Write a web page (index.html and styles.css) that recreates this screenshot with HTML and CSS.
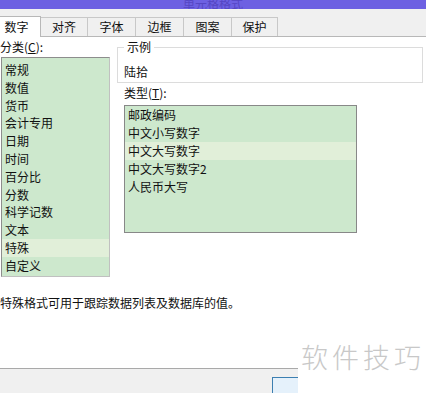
FILE: index.html
```html
<!DOCTYPE html>
<html lang="zh-CN">
<head>
    <meta charset="UTF-8">
    <meta name="viewport" content="width=device-width, initial-scale=1.0">
    <title>单元格格式</title>
    <link rel="stylesheet" href="styles.css">
</head>
<body>
    <div class="dialog">
        <div class="titlebar"><span>单元格格式</span></div>

        <div class="tabs">
            <div class="tab active first">数字</div>
            <div class="tab">对齐</div>
            <div class="tab">字体</div>
            <div class="tab">边框</div>
            <div class="tab">图案</div>
            <div class="tab last">保护</div>
        </div>

        <div class="panel">
            <div class="columns">
                <div class="col-left">
                    <div class="label">分类(<u>C</u>):</div>
                    <ul class="list category-list">
                        <li>常规</li>
                        <li>数值</li>
                        <li>货币</li>
                        <li>会计专用</li>
                        <li>日期</li>
                        <li>时间</li>
                        <li>百分比</li>
                        <li>分数</li>
                        <li>科学记数</li>
                        <li>文本</li>
                        <li class="selected">特殊</li>
                        <li>自定义</li>
                    </ul>
                </div>
                <div class="col-right">
                    <fieldset class="sample">
                        <legend>示例</legend>
                        <div class="sample-value">陆拾</div>
                    </fieldset>
                    <div class="label type-label">类型(<u>T</u>):</div>
                    <ul class="list type-list">
                        <li>邮政编码</li>
                        <li>中文小写数字</li>
                        <li class="selected">中文大写数字</li>
                        <li>中文大写数字2</li>
                        <li>人民币大写</li>
                    </ul>
                </div>
            </div>
            <p class="desc">特殊格式可用于跟踪数据列表及数据库的值。</p>
        </div>

        <div class="footer">
            <button type="button" class="ok-btn" aria-label="确定"></button>
        </div>

        <div class="watermark">软件技巧</div>
    </div>
</body>
</html>
```

FILE: styles.css
```css
body {
    margin: 0;
    padding: 0;
    font-family: "Noto Sans CJK SC", "Liberation Sans", sans-serif;
    font-size: 12px;
    color: #111;
    background: #fff;
}

.dialog {
    position: relative;
    width: 426px;
    height: 393px;
    overflow: hidden;
    display: flex;
    flex-direction: column;
}

.titlebar {
    height: 9px;
    background-color: #6d60e2;
    display: flex;
    align-items: flex-end;
    overflow: hidden;
    padding-left: 183px;
}

.titlebar span {
    line-height: 12px;
    margin-bottom: -1px;
    color: #5546c4;
}

/* tab strip */
.tabs {
    height: 27px;
    background-color: #f0f0f0;
    border-bottom: 1px solid #b8b8b8;
    display: flex;
    align-items: flex-end;
}

.tab {
    box-sizing: border-box;
    width: 48px;
    height: 19px;
    line-height: 18px;
    text-align: center;
    background-color: #f0f0f0;
    border-top: 1px solid #c8c8c8;
    border-left: 1px solid #c8c8c8;
}

.tab.last {
    border-right: 1px solid #c8c8c8;
    width: 47px;
}

.tab.active {
    background-color: #fff;
    height: 21px;
    line-height: 20px;
    margin-bottom: -1px;
    border-color: #b8b8b8;
    border-right: 1px solid #b8b8b8;
    position: relative;
}

.tab.first {
    margin-left: -8px;
    width: 49px;
}

.tab.first + .tab {
    border-left: none;
    width: 46px;
}

/* content */
.panel {
    flex: 1;
    background: #fff;
}

.columns {
    display: flex;
    gap: 7px;
}

.col-left {
    width: 110px;
}

.col-right {
    width: 306px;
}

.label {
    line-height: 16px;
    margin-top: 2px;
}

.list {
    list-style: none;
    margin: 0;
    padding: 0;
    box-sizing: border-box;
    background-color: #cde8cd;
    border: 1px solid #8d8d8d;
    border-right-color: #c0c0c0;
    border-bottom-color: #c0c0c0;
}

.list li {
    white-space: nowrap;
}

.list li.selected {
    background-color: #e1efd9;
}

.category-list {
    margin-top: 2px;
    margin-left: 1px;
    height: 220px;
    padding-top: 3px;
}

.category-list li {
    height: 17.8px;
    line-height: 17.8px;
    padding-left: 3px;
}

.sample {
    margin: 2px 0 0 0;
    padding: 0 6px 1px 6px;
    border: 1px solid #dcdcdc;
}

.sample legend {
    padding: 0 3px;
    line-height: 16px;
}

.sample-value {
    line-height: 18px;
    margin-top: 8px;
}

.type-label {
    margin-left: 7px;
}

.type-list {
    margin-top: 4px;
    margin-left: 7px;
    width: 233px;
    height: 128px;
    border-color: #888;
    border-right-color: #888;
    border-bottom-color: #888;
}

.type-list li {
    height: 18px;
    line-height: 18px;
    padding-left: 3px;
}

.desc {
    margin: 18px 0 0 0;
    line-height: 16px;
}

/* bottom bar */
.footer {
    height: 24px;
    background-color: #f0f0f0;
    border-top: 1px solid #a9a9a9;
    display: flex;
    justify-content: flex-start;
    padding-left: 272px;
}

.ok-btn {
    margin-top: 8px;
    width: 75px;
    height: 23px;
    border: 1px solid #3c7fb1;
    background-color: #e5f1fb;
    font-family: inherit;
    font-size: 12px;
    padding: 0;
}

.watermark {
    position: absolute;
    right: 0;
    bottom: 0;
    width: 128px;
    height: 55px;
    background: #fff;
    box-sizing: border-box;
    padding: 3px 0 0 3px;
    font-size: 27px;
    font-weight: 300;
    letter-spacing: 4px;
    line-height: 32px;
    color: #c8c8c8;
    white-space: nowrap;
}
```
